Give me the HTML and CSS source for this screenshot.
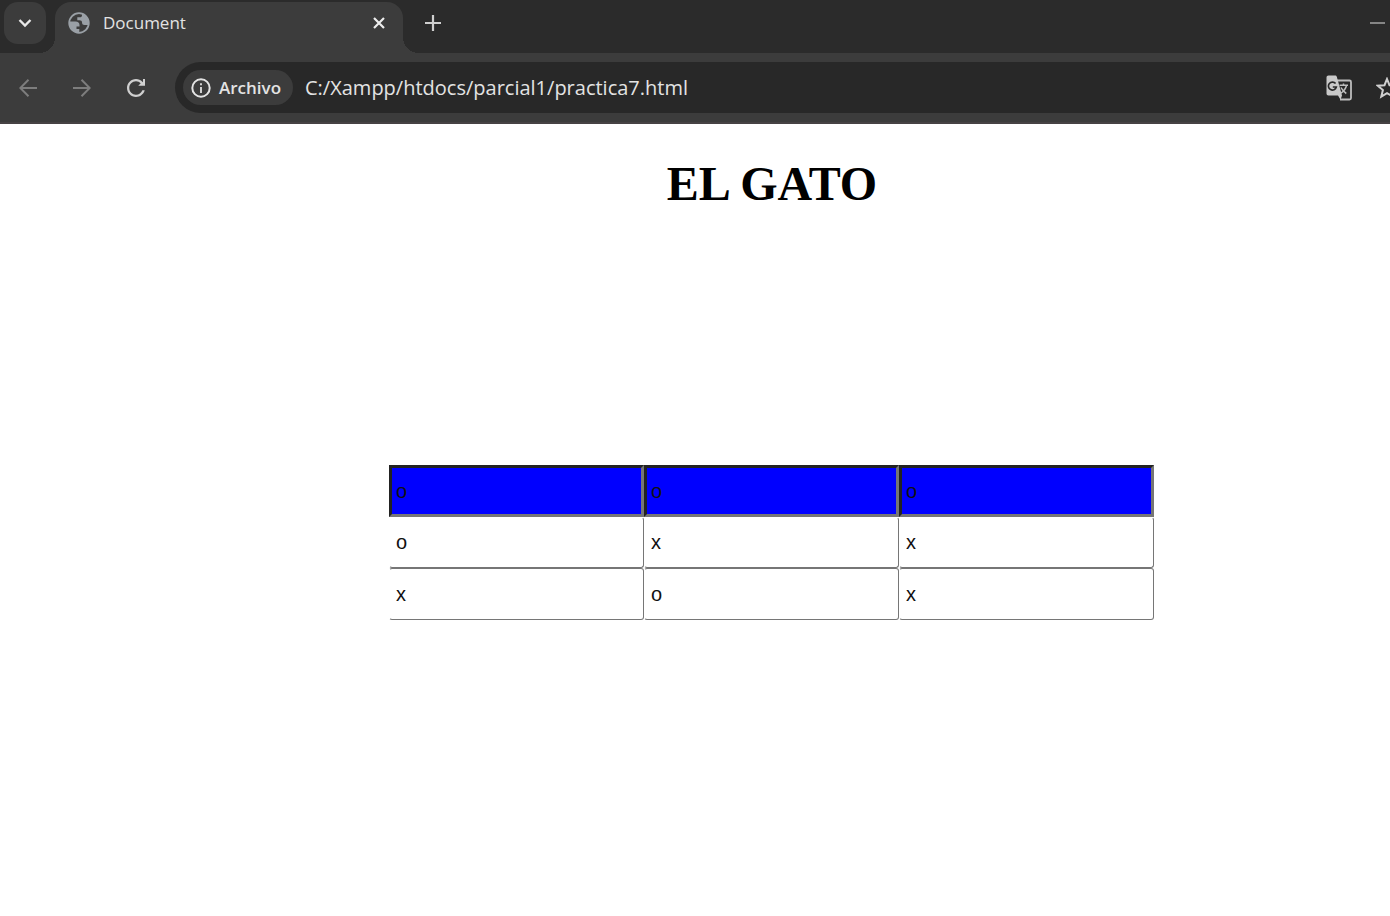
FILE: index.html
```html
<!DOCTYPE html>
<html lang="es">
<head>
<meta charset="utf-8">
<meta name="viewport" content="width=device-width, initial-scale=1">
<title>Document</title>
<link rel="stylesheet" href="styles.css">
</head>
<body>
<header class="browser">
  <div class="tabstrip">
    <button class="tab-search" type="button" aria-label="Buscar pestañas">
      <svg width="42" height="42" viewBox="0 0 42 42"><path d="M15.500 18l5.500 5.500 5.500-5.500" fill="none" stroke="#e8e8e8" stroke-width="2.400"/></svg>
    </button>
    <div class="tab">
      <svg class="globe" width="22" height="22" viewBox="0 0 22 22"><circle cx="11" cy="11" r="9.800" fill="none" stroke="#9aa0a6" stroke-width="1.800"/><path d="M1.200 9.500h6.300c2.600 0 4 1.300 4 3.500v1.500H8.500v2.500h2.800v3.500C5 21 1 16 1.200 9.500z" fill="#9aa0a6"/><path d="M14 1.500v1.700c0 1.300-.9 2.100-2.200 2.100H9.300v2.900h2.200c1.600 0 2.500.9 2.500 2.300 0 1.700 1 2.500 2.500 2.500h4C22 8 19 3 14 1.500z" fill="#9aa0a6"/></svg>
      <span class="tab-title">Document</span>
      <button class="icon-button" type="button" aria-label="Cerrar pestaña">
        <svg width="12" height="12" viewBox="0 0 12 12"><path d="M1 1l10 10M11 1L1 11" stroke="#ededed" stroke-width="2.200"/></svg>
      </button>
    </div>
    <button class="icon-button new-tab" type="button" aria-label="Nueva pestaña">
      <svg width="16" height="16" viewBox="0 0 16 16"><path d="M8 0v16M0 8h16" stroke="#cfcfcf" stroke-width="2.200"/></svg>
    </button>
    <button class="icon-button minimize" type="button" aria-label="Minimizar">
      <svg width="15" height="2" viewBox="0 0 15 2"><path d="M0 1h15" stroke="#858585" stroke-width="2"/></svg>
    </button>
  </div>
  <div class="toolbar">
    <nav class="nav" aria-label="Navegación">
      <button class="icon-button" type="button" aria-label="Atrás">
        <svg width="18" height="18" viewBox="0 0 18 18"><path d="M18 9H1.500M9.500.8L1.300 9l8.200 8.200" fill="none" stroke="#7d7d7d" stroke-width="2"/></svg>
      </button>
      <button class="icon-button" type="button" aria-label="Adelante">
        <svg width="18" height="18" viewBox="0 0 18 18"><path d="M0 9h16.500M8.500.8L16.700 9l-8.200 8.200" fill="none" stroke="#7d7d7d" stroke-width="2"/></svg>
      </button>
      <button class="icon-button" type="button" aria-label="Recargar">
        <svg width="18" height="18" viewBox="4 4 16 16"><path d="M17.650 6.350C16.200 4.900 14.210 4 12 4c-4.420 0-7.990 3.580-7.990 8s3.570 8 7.990 8c3.730 0 6.840-2.550 7.730-6h-2.080c-.82 2.330-3.040 4-5.650 4-3.310 0-6-2.690-6-6s2.690-6 6-6c1.660 0 3.140.69 4.220 1.780L14 10h6V4h-1.800v2.900z" fill="#d0d0d0"/></svg>
      </button>
    </nav>
    <div class="address">
      <button class="chip" type="button">
        <svg width="20" height="20" viewBox="0 0 20 20"><circle cx="10" cy="10" r="8.700" fill="none" stroke="#e3e3e3" stroke-width="2"/><path d="M10 9v6M10 5.200v2" stroke="#e3e3e3" stroke-width="1.800"/></svg>
        <span>Archivo</span>
      </button>
      <input class="url" type="text" aria-label="Dirección" value="C:/Xampp/htdocs/parcial1/practica7.html">
      <button class="icon-button" type="button" aria-label="Traducir">
        <svg width="26" height="26" viewBox="0 0 26 26"><path d="M11 5.500h12.500c.8 0 1.500.7 1.500 1.500v16c0 .8-.7 1.500-1.500 1.500H14" fill="none" stroke="#bdbdbd" stroke-width="1.800"/><path d="M2.500.5H9c1 0 1.500.5 1.800 1.300L16 20.500l-1.500 4.200L12 20.500H2.500c-1.200 0-2-.8-2-2v-16c0-1.200.8-2 2-2z" fill="#c9c9c9"/><path d="M9.600 8.600A4 4 0 1 0 10.300 12H6.800" fill="none" stroke="#292929" stroke-width="1.700"/><path d="M13.500 10.200h8.500M17.500 8.500v1.700M20.500 10.500c-.7 3.200-3 6-6 8M15 12.500c1.200 2.500 3 4.500 5.300 6" fill="none" stroke="#bdbdbd" stroke-width="1.500"/></svg>
      </button>
      <button class="icon-button star" type="button" aria-label="Añadir a marcadores">
        <svg width="22" height="22" viewBox="0 0 22 22"><path d="M11 2l2.500 6.200 6.700.5-5.100 4.400 1.600 6.500L11 16.100l-5.700 3.500 1.600-6.500-5.100-4.400 6.700-.5z" fill="none" stroke="#cfcfcf" stroke-width="2"/></svg>
      </button>
    </div>
  </div>
</header>
<main class="page">
  <h1 class="title">EL GATO</h1>
  <form class="board" aria-label="Tablero">
    <input class="cell winner" aria-label="Fila 1, columna 1" value="o">
    <input class="cell winner" aria-label="Fila 1, columna 2" value="o">
    <input class="cell winner" aria-label="Fila 1, columna 3" value="o">
    <input class="cell below-winner" aria-label="Fila 2, columna 1" value="o">
    <input class="cell below-winner" aria-label="Fila 2, columna 2" value="x">
    <input class="cell below-winner" aria-label="Fila 2, columna 3" value="x">
    <input class="cell" aria-label="Fila 3, columna 1" value="x">
    <input class="cell" aria-label="Fila 3, columna 2" value="o">
    <input class="cell" aria-label="Fila 3, columna 3" value="x">
  </form>
</main>
</body>
</html>
```
FILE: styles.css
```css
* { box-sizing: border-box; }

body {
  margin: 0;
  background: #fff;
  overflow-x: hidden;
}

button {
  border: 0;
  padding: 0;
  background: none;
  font: inherit;
  color: inherit;
}

svg { display: block; }

.browser {
  background: #3c3c3c;
  color: #e3e3e3;
  font-family: "Open Sans", "Noto Sans", sans-serif;
  border-bottom: 2px solid #464244;
}

.tabstrip {
  display: flex;
  height: 53px;
  padding: 2px 5px 0 4px;
  background: #2b2b2b;
}

.tab-search {
  width: 42px;
  height: 42px;
  border-radius: 14px;
  background: #3c3c3c;
}

.tab {
  position: relative;
  display: flex;
  align-items: center;
  width: 348px;
  margin-left: 9px;
  padding: 0 18px 9px 13px;
  border-radius: 16px 16px 0 0;
  background: #3c3c3c;
}

.tab::before,
.tab::after {
  content: "";
  position: absolute;
  bottom: 0;
  width: 16px;
  height: 16px;
}

.tab::before {
  right: 100%;
  background: radial-gradient(circle at 0 0, transparent 16px, #3c3c3c 16px);
}

.tab::after {
  left: 100%;
  background: radial-gradient(circle at 100% 0, transparent 16px, #3c3c3c 16px);
}

.tab-title {
  flex: 1;
  margin-left: 13px;
  font-size: 17px;
  line-height: 24px;
}

.icon-button {
  display: grid;
  place-items: center;
  flex: none;
}

.new-tab {
  height: 42px;
  margin-left: 22px;
}

.minimize {
  height: 42px;
  margin-left: auto;
}

.toolbar {
  display: flex;
  align-items: center;
  padding: 9px 0;
}

.nav {
  display: flex;
  gap: 36px;
  padding: 0 30px 0 19px;
}

.address {
  display: flex;
  align-items: center;
  flex: 1;
  min-width: 0;
  height: 51px;
  padding-left: 8px;
  border-radius: 26px 0 0 26px;
  background: #282828;
  overflow: hidden;
}

.chip {
  display: flex;
  align-items: center;
  flex: none;
  gap: 8px;
  height: 35px;
  padding: 0 12px 0 8px;
  border-radius: 18px;
  background: #3c3c3c;
  font-size: 17px;
  font-weight: 600;
}

.url {
  flex: 1;
  min-width: 0;
  margin-left: 12px;
  padding: 0;
  border: 0;
  background: none;
  color: #e3e3e3;
  font-family: "Open Sans", "Noto Sans", sans-serif;
  font-size: 20px;
}

.star {
  margin: 0 -8px 0 24px;
}

.page {
  display: flex;
  flex-direction: column;
  align-items: center;
  padding: 32px 0 64px 154px;
}

.title {
  margin: 0;
  font-family: "Liberation Serif", "Times New Roman", serif;
  font-size: 48px;
  line-height: 56px;
}

.board {
  display: grid;
  grid-template-columns: repeat(3, 255px);
  grid-template-rows: 52px 51px 52px;
  margin-top: 253px;
  padding-right: 1px;
}

.cell {
  min-width: 0;
  padding: 0 6px;
  border: 1px solid #767676;
  border-left-color: transparent;
  border-radius: 3px;
  background: #fff;
  color: #111;
  font-family: "Liberation Sans", Arial, sans-serif;
  font-size: 20px;
}

.below-winner { border-top-color: transparent; }

.winner {
  padding: 0 4px;
  border: 3px solid #767676;
  border-top-color: #222;
  border-left-color: #222;
  border-radius: 0;
  background: #00f;
}
```
